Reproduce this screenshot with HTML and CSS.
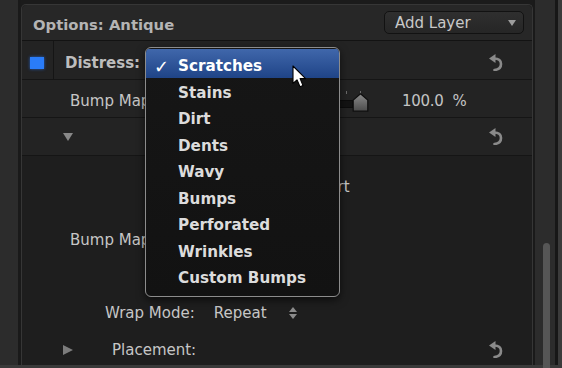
FILE: index.html
```html
<!DOCTYPE html>
<html lang="en">
<head>
    <meta charset="UTF-8">
    <title>Options: Antique</title>
    <link rel="stylesheet" href="styles.css">
</head>
<body>
    <div class="app">
        <div class="main">
            <div class="sidebar"></div>

            <div class="panel">
                <div class="header">
                    <span class="title">Options: Antique</span>
                    <div class="add-layer">
                        <span>Add Layer</span>
                        <span class="caret"></span>
                    </div>
                </div>

                <div class="row row-distress">
                    <div class="check-cell"><span class="check"></span></div>
                    <span class="label bold">Distress:</span>
                    <svg class="reset" viewBox="0 0 14 17" width="14" height="17">
                        <polygon points="0,4.5 6.5,0 6.5,9"/>
                        <path d="M5 4.5 C9.5 4.5 12 6.8 12 10 C12 13.2 9.8 15.6 5.5 16"/>
                    </svg>
                </div>

                <div class="row row-bump">
                    <span class="label bump-label">Bump Map</span>
                    <div class="slider">
                        <div class="track"></div>
                        <span class="tick tick-a"></span>
                        <span class="tick tick-b"></span>
                        <svg class="thumb" viewBox="0 0 17 19" width="17" height="19">
                            <defs>
                                <linearGradient id="thumbFill" x1="0" y1="0" x2="0" y2="1">
                                    <stop offset="0" stop-color="#8a8a8a"/>
                                    <stop offset="1" stop-color="#4c4c4c"/>
                                </linearGradient>
                            </defs>
                            <path d="M8.5 0.8 L15.8 7 L15.8 18.2 L1.2 18.2 L1.2 7 Z" fill="url(#thumbFill)" stroke="#0e0e0e" stroke-width="1.2"/>
                        </svg>
                    </div>
                    <span class="value">100.0&nbsp;&nbsp;%</span>
                </div>

                <div class="row row-disclosure">
                    <span class="tri-down"></span>
                    <svg class="reset" viewBox="0 0 14 17" width="14" height="17">
                        <polygon points="0,4.5 6.5,0 6.5,9"/>
                        <path d="M5 4.5 C9.5 4.5 12 6.8 12 10 C12 13.2 9.8 15.6 5.5 16"/>
                    </svg>
                </div>

                <div class="body">
                    <div class="line line-start"><span>Start</span></div>
                    <div class="line line-bump"><span>Bump Map</span></div>
                    <div class="spacer"></div>
                    <div class="line line-wrap">
                        <span>Wrap Mode:</span>
                        <span class="wrap-value">Repeat</span>
                        <span class="stepper">
                            <span class="up"></span>
                            <span class="down"></span>
                        </span>
                    </div>
                    <div class="line line-place">
                        <span class="tri-right"></span>
                        <span class="place-label">Placement:</span>
                        <svg class="reset" viewBox="0 0 14 17" width="14" height="17">
                            <polygon points="0,4.5 6.5,0 6.5,9"/>
                            <path d="M5 4.5 C9.5 4.5 12 6.8 12 10 C12 13.2 9.8 15.6 5.5 16"/>
                        </svg>
                    </div>
                </div>
            </div>

            <div class="scroll">
                <div class="scroll-edge"></div>
                <div class="scroll-track"><div class="scroll-thumb"></div></div>
                <div class="scroll-gap"></div>
                <div class="scroll-side"></div>
            </div>
        </div>
        <div class="footer"></div>

        <!-- popup menu open over the Distress control -->
        <div class="menu">
            <div class="item selected"><span class="tick-mark">✓</span>Scratches</div>
            <div class="item first-after">Stains</div>
            <div class="item">Dirt</div>
            <div class="item">Dents</div>
            <div class="item">Wavy</div>
            <div class="item">Bumps</div>
            <div class="item">Perforated</div>
            <div class="item">Wrinkles</div>
            <div class="item">Custom Bumps</div>
        </div>

        <svg class="cursor" viewBox="0 0 16 24" width="16" height="24">
            <path d="M1 1 L1 18.5 L5 14.8 L8 21.8 L11 20.5 L8.1 13.6 L13.6 13.6 Z" fill="#fff" stroke="#000" stroke-width="1.1" stroke-linejoin="round"/>
        </svg>
    </div>
</body>
</html>
```

FILE: styles.css
```css
body {
    margin: 0;
    background: #1b1b1b;
    font-family: "DejaVu Sans", sans-serif;
    font-size: 15px;
    color: #c4c4c4;
}
.app {
    position: relative;
    width: 562px;
    height: 368px;
    overflow: hidden;
}
.main {
    display: flex;
    height: 365px;
}
.footer {
    height: 3px;
    background: #3a3a3a;
}
.sidebar {
    width: 18px;
    background: #2c2c2c;
    border-right: 3px solid #1a1a1a;
}

/* panel */
.panel {
    width: 510px;
    margin-top: 4px;
    border: 1px solid #363636;
    border-bottom: none;
    border-radius: 5px 5px 0 0;
    background: #1e1e1e;
    display: flex;
    flex-direction: column;
}
.header {
    height: 35px;
    display: flex;
    align-items: center;
    background: #272727;
    border-bottom: 1px solid #131313;
    border-radius: 5px 5px 0 0;
}
.title {
    padding: 3px 0 0 11px;
    font-weight: bold;
    color: #b4b4b4;
    font-size: 14.8px;
}
.add-layer {
    margin-left: auto;
    margin-right: 8px;
    width: 140px;
    height: 23px;
    box-sizing: border-box;
    display: flex;
    align-items: center;
    padding: 0 7px 0 10px;
    background: linear-gradient(#2f2f2f, #262626);
    border: 1px solid #121212;
    border-radius: 5px;
    color: #c8c8c8;
}
.caret {
    margin-left: auto;
    width: 0;
    height: 0;
    border-left: 4.5px solid transparent;
    border-right: 4.5px solid transparent;
    border-top: 6px solid #9c9c9c;
}

.row {
    height: 38px;
    box-sizing: border-box;
    display: flex;
    align-items: center;
    background: #232323;
    border-bottom: 1px solid #151515;
}
.row-distress {
    height: 39px;
    padding-top: 5px;
    align-items: stretch;
}
.row-distress .label,
.row-distress .reset {
    align-self: center;
}
.check-cell {
    width: 31px;
    margin-top: -5px;
    border-right: 1px solid #151515;
    display: flex;
    align-items: center;
    padding-top: 5px;
    box-sizing: content-box;
}
.check {
    margin-left: 8px;
    width: 14px;
    height: 12px;
    background: #2a7cf8;
    box-shadow: 0 0 3px rgba(40, 120, 255, 0.7);
}
.label {
    color: #c6c6c6;
}
.bold {
    font-weight: bold;
    color: #bdbdbd;
    padding-left: 11px;
}
.reset {
    margin-left: auto;
    margin-right: 29px;
    fill: #8a8a8a;
}
.reset path {
    fill: none;
    stroke: #8a8a8a;
    stroke-width: 2.6;
    stroke-linecap: round;
}

.row-bump {
    padding-top: 4px;
}
.bump-label {
    padding-left: 48px;
    width: 180px;
}
.slider {
    position: relative;
    width: 120px;
    height: 24px;
}
.track {
    position: absolute;
    left: 0;
    top: 11px;
    width: 103px;
    height: 8px;
    background: #131313;
    border: 1px solid #0c0c0c;
    box-sizing: border-box;
}
.tick {
    position: absolute;
    top: 2px;
    width: 1px;
    height: 3px;
    background: #6a6a6a;
}
.tick-a { left: 96px; }
.tick-b { left: 110px; }
.thumb {
    position: absolute;
    left: 102px;
    top: 4px;
}
.value {
    margin-left: 32px;
    color: #c4c4c4;
    letter-spacing: -0.3px;
}

.tri-down {
    margin-left: 41px;
    width: 0;
    height: 0;
    border-left: 5.5px solid transparent;
    border-right: 5.5px solid transparent;
    border-top: 8px solid #888;
}

/* lower area without row backgrounds */
.body {
    flex: 1;
    display: flex;
    flex-direction: column;
}
.line {
    display: flex;
    align-items: center;
    color: #c6c6c6;
}
.line-start {
    height: 62px;
    padding-left: 291px;
}
.line-bump {
    height: 44px;
    padding-left: 48px;
}
.spacer {
    height: 33px;
}
.line-wrap {
    height: 36px;
    padding-left: 83px;
}
.wrap-value {
    margin-left: 19px;
}
.stepper {
    margin-left: 22px;
    display: flex;
    flex-direction: column;
    gap: 2px;
}
.stepper .up,
.stepper .down {
    width: 0;
    height: 0;
    border-left: 4px solid transparent;
    border-right: 4px solid transparent;
}
.stepper .up { border-bottom: 5px solid #8c8c8c; }
.stepper .down { border-top: 5px solid #8c8c8c; }
.line-place {
    height: 34px;
    box-sizing: border-box;
    padding: 3px 0 0 41px;
}
.tri-right {
    width: 0;
    height: 0;
    border-top: 5.5px solid transparent;
    border-bottom: 5.5px solid transparent;
    border-left: 10px solid #7c7c7c;
}
.place-label {
    margin-left: 39px;
}

/* scrollbar column */
.scroll {
    display: flex;
    flex: 1;
}
.scroll-edge {
    width: 2px;
    background: #1a1a1a;
}
.scroll-track {
    width: 20px;
    background: #2c2c2c;
}
.scroll-thumb {
    margin: 243px 0 0 8px;
    width: 7px;
    height: 140px;
    border-radius: 4px;
    background: #565656;
}
.scroll-gap {
    width: 3px;
    background: #171717;
}
.scroll-side {
    flex: 1;
    background: #3b3b3b;
}

/* popup menu */
.menu {
    position: absolute;
    left: 145px;
    top: 47px;
    width: 195px;
    height: 250px;
    box-sizing: border-box;
    padding-top: 1px;
    border: 1px solid #8c8c8c;
    border-radius: 6px;
    background: linear-gradient(#161616, #121212);
    box-shadow: 0 3px 8px rgba(0, 0, 0, 0.6);
    overflow: hidden;
}
.item {
    position: relative;
    height: 26.5px;
    line-height: 26.5px;
    padding-left: 32px;
    font-weight: bold;
    font-size: 15.2px;
    color: #dcdcdc;
}
.item.selected {
    height: 29px;
    line-height: 23px;
    padding-top: 6px;
    box-sizing: border-box;
    background: linear-gradient(#4067ab, #1f4487);
    color: #fff;
}
.item.first-after {
    margin-top: 1.7px;
}
.tick-mark {
    position: absolute;
    left: 8px;
    font-size: 18px;
}

.cursor {
    position: absolute;
    left: 292px;
    top: 65px;
}
```
